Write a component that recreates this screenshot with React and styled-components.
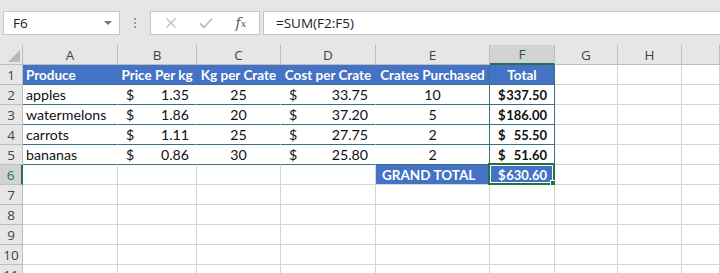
import React from 'react'
import styled, { createGlobalStyle } from 'styled-components'

const GlobalStyle = createGlobalStyle`
    html, body {
        margin: 0;
        padding: 0;
        background: #e6e6e6;
    }
`

const COLS = ['A', 'B', 'C', 'D', 'E', 'F', 'G', 'H', '']
const GRID = '#d4d4d4'
const TEAL = '#3c6e86'
const BLUE = '#4472c4'
const GREEN = '#217346'

const rows = [
    { name: 'apples', price: '1.35', kg: 25, cost: '33.75', crates: 10, total: '337.50' },
    { name: 'watermelons', price: '1.86', kg: 20, cost: '37.20', crates: 5, total: '186.00' },
    { name: 'carrots', price: '1.11', kg: 25, cost: '27.75', crates: 2, total: '55.50' },
    { name: 'bananas', price: '0.86', kg: 30, cost: '25.80', crates: 2, total: '51.60' },
]

const Money = ({ value }) => (
    <Acct>
        <span>$</span>
        <span>{value}</span>
    </Acct>
)

const App = () => {
    const blank = (key, n) => COLS.slice(n).map((c, i) => <Cell key={key + i} />)

    return (
        <Window>
            <GlobalStyle />
            <FormulaBar>
                <NameBox>
                    F6
                    <Caret />
                </NameBox>
                <Grip>
                    <i /><i /><i />
                </Grip>
                <FxBox>
                    <FxBtn>
                        <svg width="12" height="12" viewBox="0 0 12 12">
                            <path d="M1.5 1.5 L10.5 10.5 M10.5 1.5 L1.5 10.5" stroke="#bdbdbd" strokeWidth="1.4" fill="none" />
                        </svg>
                    </FxBtn>
                    <FxBtn>
                        <svg width="14" height="12" viewBox="0 0 14 12">
                            <path d="M1 6.5 L5 10.5 L13 1.5" stroke="#bdbdbd" strokeWidth="1.8" fill="none" />
                        </svg>
                    </FxBtn>
                    <FxBtn $fx>
                        f<sub>x</sub>
                    </FxBtn>
                </FxBox>
                <FormulaInput>=SUM(F2:F5)</FormulaInput>
            </FormulaBar>

            <Sheet>
                <Corner>
                    <svg width="12" height="12" viewBox="0 0 12 12">
                        <path d="M12 0 L12 12 L0 12 Z" fill="#b8b8b8" />
                    </svg>
                </Corner>
                {COLS.map((c, i) => (
                    <ColHead key={'h' + i} $active={c === 'F'}>{c}</ColHead>
                ))}

                <RowHead>1</RowHead>
                <Cell $fill={BLUE} $bottom={TEAL} $right={BLUE} $bold $light>Produce</Cell>
                <Cell $fill={BLUE} $bottom={TEAL} $right={BLUE} $bold $light $align="center">Price Per kg</Cell>
                <Cell $fill={BLUE} $bottom={TEAL} $right={BLUE} $bold $light $align="center">Kg per Crate</Cell>
                <Cell $fill={BLUE} $bottom={TEAL} $right={BLUE} $bold $light $align="center">Cost per Crate</Cell>
                <Cell $fill={BLUE} $bottom={TEAL} $right={TEAL} $bold $light $align="center">Crates Purchased</Cell>
                <Cell $fill={BLUE} $bottom={TEAL} $right={TEAL} $bold $light $align="center">Total</Cell>
                {blank('r1', 6)}

                {rows.map((r, i) => (
                    <React.Fragment key={r.name}>
                        <RowHead>{i + 2}</RowHead>
                        <Cell $bottom={TEAL} $right="#fff">{r.name}</Cell>
                        <Cell $bottom={TEAL} $right="#fff" $pad><Money value={r.price} /></Cell>
                        <Cell $bottom={TEAL} $right="#fff" $align="center">{r.kg}</Cell>
                        <Cell $bottom={TEAL} $right="#fff" $pad><Money value={r.cost} /></Cell>
                        <Cell $bottom={TEAL} $right={TEAL} $align="center">{r.crates}</Cell>
                        <Cell $bottom={TEAL} $right={TEAL} $bold $small $pad><Money value={r.total} /></Cell>
                        {blank('r' + i, 6)}
                    </React.Fragment>
                ))}

                <RowHead $active>6</RowHead>
                <Cell />
                <Cell />
                <Cell />
                <Cell />
                <Cell $fill={BLUE} $right={BLUE} $bold $light $indent>GRAND TOTAL</Cell>
                <Cell $fill={BLUE} $bold $small $light $pad>
                    <Money value="630.60" />
                    <Selection>
                        <Handle />
                    </Selection>
                </Cell>
                {blank('r6', 6)}

                {[7, 8, 9, 10, 11].map(n => (
                    <React.Fragment key={n}>
                        <RowHead>{n}</RowHead>
                        {blank('e' + n, 0)}
                    </React.Fragment>
                ))}
            </Sheet>
        </Window>
    )
}

const Window = styled.div`
    width: 720px;
    height: 273px;
    overflow: hidden;
    background: #e6e6e6;
    display: flex;
    flex-direction: column;
`

const FormulaBar = styled.div`
    height: 45px;
    flex-shrink: 0;
    box-sizing: border-box;
    display: flex;
    align-items: flex-start;
    padding: 11px 0 0 3px;
    font-family: "Open Sans", "Liberation Sans", sans-serif;
    font-size: 13.5px;
    color: #222;
`

const Box = styled.div`
    height: 24px;
    box-sizing: border-box;
    background: #fff;
    border: 1px solid #c6c6c6;
    display: flex;
    align-items: center;
`

const NameBox = styled(Box)`
    width: 117px;
    padding-left: 9px;
    justify-content: space-between;
    padding-right: 7px;
`

const Caret = styled.span`
    width: 0;
    height: 0;
    border-left: 4px solid transparent;
    border-right: 4px solid transparent;
    border-top: 4px solid #777;
`

const Grip = styled.div`
    width: 30px;
    height: 24px;
    display: flex;
    flex-direction: column;
    align-items: center;
    justify-content: center;
    gap: 2px;

    i {
        width: 2px;
        height: 2px;
        background: #9a9a9a;
    }
`

const FxBox = styled(Box)`
    width: 110px;
    padding: 0 4px 0 6px;
    justify-content: space-between;
`

const FxBtn = styled.span`
    width: 28px;
    display: flex;
    justify-content: center;
    align-items: center;
    font-family: "DejaVu Serif", "Liberation Serif", serif;
    font-style: italic;
    font-size: 14px;
    color: #555;

    sub {
        font-size: 10px;
        vertical-align: -1px;
    }
`

const FormulaInput = styled(Box)`
    flex: 1;
    margin-left: 3px;
    padding-left: 12px;
    border-right: none;
`

const Sheet = styled.div`
    flex: 1;
    display: grid;
    grid-template-columns: 23px 95px 79px 84px 95px 114px 65px 63px 64px 1fr;
    grid-auto-rows: 20px;
    align-content: start;
    background: #fff;
    font-family: Lato, "Liberation Sans", sans-serif;
    font-size: 14.2px;
    color: #111;
`

const Corner = styled.div`
    background: #e6e6e6;
    border-right: 1px solid #bdbdbd;
    border-bottom: 1px solid #bdbdbd;
    display: flex;
    align-items: flex-end;
    justify-content: flex-end;
    padding: 0 2px 2px 0;
`

const ColHead = styled.div`
    background: ${p => (p.$active ? '#d2d2d2' : '#e6e6e6')};
    border-right: 1px solid #bdbdbd;
    border-bottom: ${p => (p.$active ? `2px solid ${GREEN}` : '1px solid #bdbdbd')};
    color: ${p => (p.$active ? '#1e5d3a' : '#444')};
    font-family: "Open Sans", "Liberation Sans", sans-serif;
    font-size: 13.5px;
    display: flex;
    align-items: center;
    justify-content: center;
    box-sizing: border-box;
`

const RowHead = styled.div`
    background: ${p => (p.$active ? '#d2d2d2' : '#e6e6e6')};
    border-right: ${p => (p.$active ? `2px solid ${GREEN}` : '1px solid #bdbdbd')};
    border-bottom: 1px solid #bdbdbd;
    color: ${p => (p.$active ? GREEN : '#444')};
    font-family: "Open Sans", "Liberation Sans", sans-serif;
    font-size: 13.5px;
    display: flex;
    align-items: center;
    justify-content: center;
    box-sizing: border-box;
`

const Cell = styled.div`
    position: relative;
    box-sizing: border-box;
    background: ${p => p.$fill || '#fff'};
    border-right: 1px solid ${p => p.$right || GRID};
    border-bottom: 1px solid ${p => p.$bottom || GRID};
    color: ${p => (p.$light ? '#fff' : '#111')};
    font-weight: ${p => (p.$bold ? 700 : 400)};
    font-size: ${p => (p.$small ? '13px' : p.$bold ? '13.5px' : 'inherit')};
    display: flex;
    align-items: center;
    justify-content: ${p => (p.$align === 'center' ? 'center' : 'flex-start')};
    padding: ${p => (p.$pad ? '0 7px 0 8px' : p.$indent ? '0 0 0 6px' : '0 3px')};
    white-space: nowrap;
`

const Acct = styled.div`
    flex: 1;
    display: flex;
    justify-content: space-between;
`

const Selection = styled.div`
    position: absolute;
    left: -2px;
    top: -2px;
    right: -1px;
    bottom: -1px;
    border: 2px solid ${GREEN};
    box-shadow: inset 0 0 0 1px #fff;
`

const Handle = styled.div`
    position: absolute;
    right: -4px;
    bottom: -4px;
    width: 5px;
    height: 5px;
    background: ${GREEN};
    border: 1px solid #fff;
`

export default App
